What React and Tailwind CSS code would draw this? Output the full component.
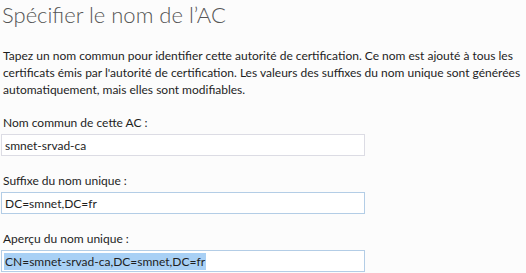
export default function App() {
  const font = { fontFamily: '"Segoe UI", Lato, "Noto Sans", sans-serif' };
  return (
    <div className="h-[273px] w-[526px] overflow-hidden bg-[#fcfcfc] text-[#1e1e1e]" style={font}>
      <h1 className="h-[47px] pl-[2px] pt-[1px] text-[22px] font-light leading-[28px] text-[#555555]">
        Spécifier le nom de l’AC
      </h1>
      <p className="pl-[3px] text-[12px] leading-[17px]">
        Tapez un nom commun pour identifier cette autorité de certification. Ce nom est ajouté à tous les
        certificats émis par l'autorité de certification. Les valeurs des suffixes du nom unique sont générées
        automatiquement, mais elles sont modifiables.
      </p>
      <div className="mt-[16px] flex flex-col gap-[16px] pl-[1px]">
        <Field label="Nom commun de cette AC :" value="smnet-srvad-ca" border="border-[#dcdce4]" />
        <Field label="Suffixe du nom unique :" value="DC=smnet,DC=fr" border="border-[#b3cde6]" />
        <Field label="Aperçu du nom unique :" value="CN=smnet-srvad-ca,DC=smnet,DC=fr" border="border-[#b3cde6]" selected />
      </div>
    </div>
  );
}

function Field({ label, value, border, selected }) {
  return (
    <div className="flex flex-col gap-[3px]">
      <label className="pl-[2px] text-[12px] leading-[17px]">{label}</label>
      <div className={`flex h-[22px] w-[364px] items-center border bg-white px-[2px] text-[12px] ${border}`}>
        <span className={selected ? "bg-[#a8d0f5] px-[1px] leading-[17px]" : "px-[1px] leading-[17px]"}>{value}</span>
      </div>
    </div>
  );
}
